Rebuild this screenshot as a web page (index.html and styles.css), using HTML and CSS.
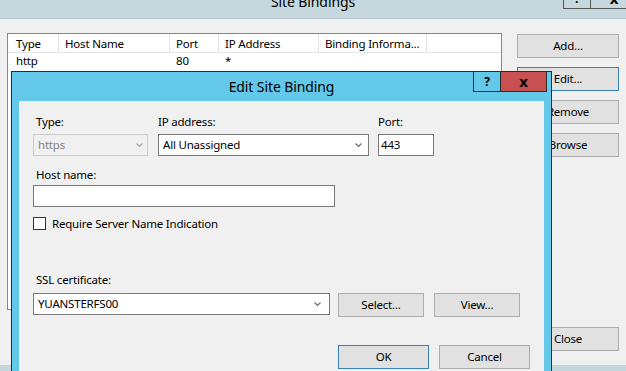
FILE: index.html
```html
<!DOCTYPE html>
<html>
<head>
<meta charset="utf-8">
<title>Site Bindings</title>
<link rel="stylesheet" href="styles.css">
</head>
<body>
<div class="window">
  <div class="titlebar">
    <div class="title">Site Bindings</div>
    <div class="caps">
      <span class="cap cap-help">?</span>
      <span class="cap cap-close">x</span>
    </div>
  </div>
  <div class="main">
    <div class="list">
      <div class="list-head">
        <div class="col c-type">Type</div>
        <div class="col c-host">Host Name</div>
        <div class="col c-port">Port</div>
        <div class="col c-ip">IP Address</div>
        <div class="col c-info">Binding Informa...</div>
      </div>
      <div class="list-row">
        <div class="col c-type">http</div>
        <div class="col c-host"></div>
        <div class="col c-port">80</div>
        <div class="col c-ip">*</div>
        <div class="col c-info"></div>
      </div>
    </div>
    <div class="side">
      <button class="btn">Add...</button>
      <button class="btn focus">Edit...</button>
      <button class="btn">Remove</button>
      <button class="btn">Browse</button>
      <button class="btn btn-close">Close</button>
    </div>
  </div>
  <div class="frame-bottom"></div>
</div>

<div class="dialog">
  <div class="dlg-title">
    <div class="title">Edit Site Binding</div>
    <div class="dlg-caps">
      <span class="dcap dcap-help">?</span>
      <span class="dcap dcap-close">x</span>
    </div>
  </div>
  <div class="dlg-body">
    <div class="row-top">
      <div class="field f-type">
        <div class="label">Type:</div>
        <div class="combo disabled"><span>https</span><svg class="chev" width="7" height="5" viewBox="0 0 7 5"><polyline points="0.5,0.5 3.5,3.5 6.5,0.5" fill="none" stroke="currentColor" stroke-width="1.2"/></svg></div>
      </div>
      <div class="field f-ip">
        <div class="label flush">IP address:</div>
        <div class="combo"><span>All Unassigned</span><svg class="chev" width="7" height="5" viewBox="0 0 7 5"><polyline points="0.5,0.5 3.5,3.5 6.5,0.5" fill="none" stroke="currentColor" stroke-width="1.2"/></svg></div>
      </div>
      <div class="field f-port">
        <div class="label flush">Port:</div>
        <div class="textbox port">443</div>
      </div>
    </div>

    <div class="label label-host">Host name:</div>
    <div class="textbox host"></div>

    <div class="check-row">
      <span class="checkbox"></span>
      <span class="check-label">Require Server Name Indication</span>
    </div>

    <div class="label label-ssl">SSL certificate:</div>
    <div class="ssl-row">
      <div class="combo ssl"><span>YUANSTERFS00</span><svg class="chev" width="7" height="5" viewBox="0 0 7 5"><polyline points="0.5,0.5 3.5,3.5 6.5,0.5" fill="none" stroke="currentColor" stroke-width="1.2"/></svg></div>
      <button class="btn btn-dlg btn-select">Select...</button>
      <button class="btn btn-dlg">View...</button>
    </div>

    <div class="actions">
      <button class="btn btn-action focus">OK</button>
      <button class="btn btn-action">Cancel</button>
    </div>
  </div>
</div>
</body>
</html>
```

FILE: styles.css
```css
* { box-sizing: border-box; }
html, body { margin: 0; padding: 0; }
body {
  width: 626px;
  height: 371px;
  overflow: hidden;
  position: relative;
  background: #f0f0f0;
  font-family: "Noto Sans", "Open Sans", sans-serif;
  font-size: 11.5px;
  letter-spacing: -0.2px;
  color: #000;
}

/* ---------- outer window ---------- */
.window {
  display: flex;
  flex-direction: column;
  height: 371px;
}
.titlebar {
  height: 19px;
  flex: none;
  background: #c5d8de;
  border-bottom: 1px solid #b3c5cb;
  display: grid;
  grid-template-columns: 1fr auto 1fr;
  align-items: start;
}
.titlebar .title {
  grid-column: 2;
  font-size: 14px;
  letter-spacing: -0.1px;
  line-height: 20px;
  margin-top: -8px;
  white-space: nowrap;
}
.caps {
  grid-column: 3;
  justify-self: end;
  display: flex;
  height: 22px;
  margin-top: -13px;
  margin-right: -12px;
  border: 1px solid #555;
}
.cap {
  display: flex;
  align-items: center;
  justify-content: center;
  font-weight: bold;
  letter-spacing: 0;
}
.cap-help { width: 26px; font-size: 12px; }
.cap-close { width: 47px; font-size: 15px; border-left: 1px solid #555; }

.main {
  flex: none;
  height: 346px;
  display: flex;
  gap: 15px;
  padding: 14px 7px 14px 7px;
}
.list {
  width: 495px;
  height: 277px;
  flex: none;
  background: #fff;
  border: 1px solid #828790;
}
.list-head, .list-row { display: flex; }
.list-head {
  height: 19px;
  border-bottom: 1px solid #e5e5e5;
}
.list-head .col {
  padding-top: 2px;
  line-height: 16px;
  border-right: 1px solid #e5e5e5;
  padding-left: 6px;
  white-space: nowrap;
}
.list-row .col {
  line-height: 16px;
  padding-left: 6px;
}
.list .c-type { width: 51px; padding-left: 8px; }
.list .c-host { width: 111px; }
.list .c-port { width: 49px; }
.list .c-ip { width: 100px; }
.list .c-info { width: 108px; }

.side {
  width: 102px;
  flex: none;
  margin-top: 1px;
  display: flex;
  flex-direction: column;
  gap: 9px;
}
.btn {
  font-family: inherit;
  font-size: 11.5px;
  letter-spacing: -0.2px;
  color: #000;
  height: 24px;
  padding: 0;
  margin: 0;
  background: #e1e1e1;
  border: 1px solid #adadad;
  border-radius: 0;
  text-align: center;
  line-height: 20px;
}
.btn.focus { border-color: #3c7fb1; }
.side .btn { width: 102px; }
.side .btn-close { margin-top: auto; }

.frame-bottom {
  flex: 1;
  background: #c3d6dc;
}

/* ---------- dialog ---------- */
.dialog {
  position: absolute;
  left: 11px;
  top: 71px;
  width: 541px;
  height: 320px;
  border: 1px solid #2b2b2b;
  background: #63c8ea;
  display: flex;
  flex-direction: column;
}
.dlg-title {
  height: 29px;
  flex: none;
  display: grid;
  grid-template-columns: 1fr auto 1fr;
  align-items: start;
}
.dlg-title .title {
  grid-column: 2;
  font-size: 14px;
  letter-spacing: -0.1px;
  line-height: 29px;
  white-space: nowrap;
}
.dlg-caps {
  grid-column: 3;
  justify-self: end;
  display: flex;
  height: 21px;
  margin-top: -1px;
  margin-right: 4px;
  border: 1px solid #2b2b2b;
}
.dcap {
  display: flex;
  align-items: center;
  justify-content: center;
  font-weight: bold;
  letter-spacing: 0;
}
.dcap-help { width: 26px; font-size: 12px; }
.dcap-close {
  width: 46px;
  font-size: 15px;
  background: #c75050;
  border-left: 1px solid #2b2b2b;
  padding-bottom: 2px;
}

.dlg-body {
  flex: 1;
  margin: 0 7px;
  background: #f0f0f0;
  padding: 13px 14px 0 14px;
  display: flex;
  flex-direction: column;
  align-items: flex-start;
}
.label {
  line-height: 16px;
  padding-left: 3px;
  white-space: nowrap;
}
.label.flush { padding-left: 0; }
.row-top {
  display: flex;
  gap: 10px;
}
.field { display: flex; flex-direction: column; }
.field .label { margin-bottom: 4px; }
.f-port { margin-left: -1px; }

.combo {
  height: 22px;
  display: flex;
  align-items: center;
  justify-content: space-between;
  padding: 0 5px 2px 4px;
  background: #fff;
  border: 1px solid #7a7a7a;
  color: #000;
}
.combo .chev { color: #707070; flex: none; margin-top: 3px; }
.combo.disabled {
  background: #f0f0f0;
  border-color: #cccccc;
  color: #838383;
}
.combo.disabled .chev { color: #a8a8a8; }
.f-type .combo { width: 115px; padding-right: 4px; }
.f-ip .combo { width: 211px; padding-right: 6px; }

.textbox {
  height: 22px;
  background: #fff;
  border: 1px solid #7a7a7a;
  line-height: 19px;
  padding-left: 2px;
}
.textbox.port { width: 56px; }

.label-host { margin-top: 11px; margin-bottom: 2px; }
.textbox.host { width: 302px; }

.check-row {
  margin-top: 10px;
  height: 13px;
  display: flex;
  align-items: center;
  gap: 6px;
}
.checkbox {
  width: 13px;
  height: 13px;
  background: #fff;
  border: 1px solid #333;
}
.check-label { line-height: 16px; white-space: nowrap; }

.label-ssl { margin-top: 42px; margin-bottom: 5px; }
.ssl-row {
  display: flex;
  align-items: flex-start;
}
.combo.ssl { width: 297px; padding-right: 8px; }
.btn-dlg { width: 86px; }
.btn-select { margin-left: 8px; margin-right: 10px; }

.actions {
  align-self: flex-end;
  margin-top: 28px;
  display: flex;
  gap: 10px;
}
.btn-action { width: 91px; }
```
